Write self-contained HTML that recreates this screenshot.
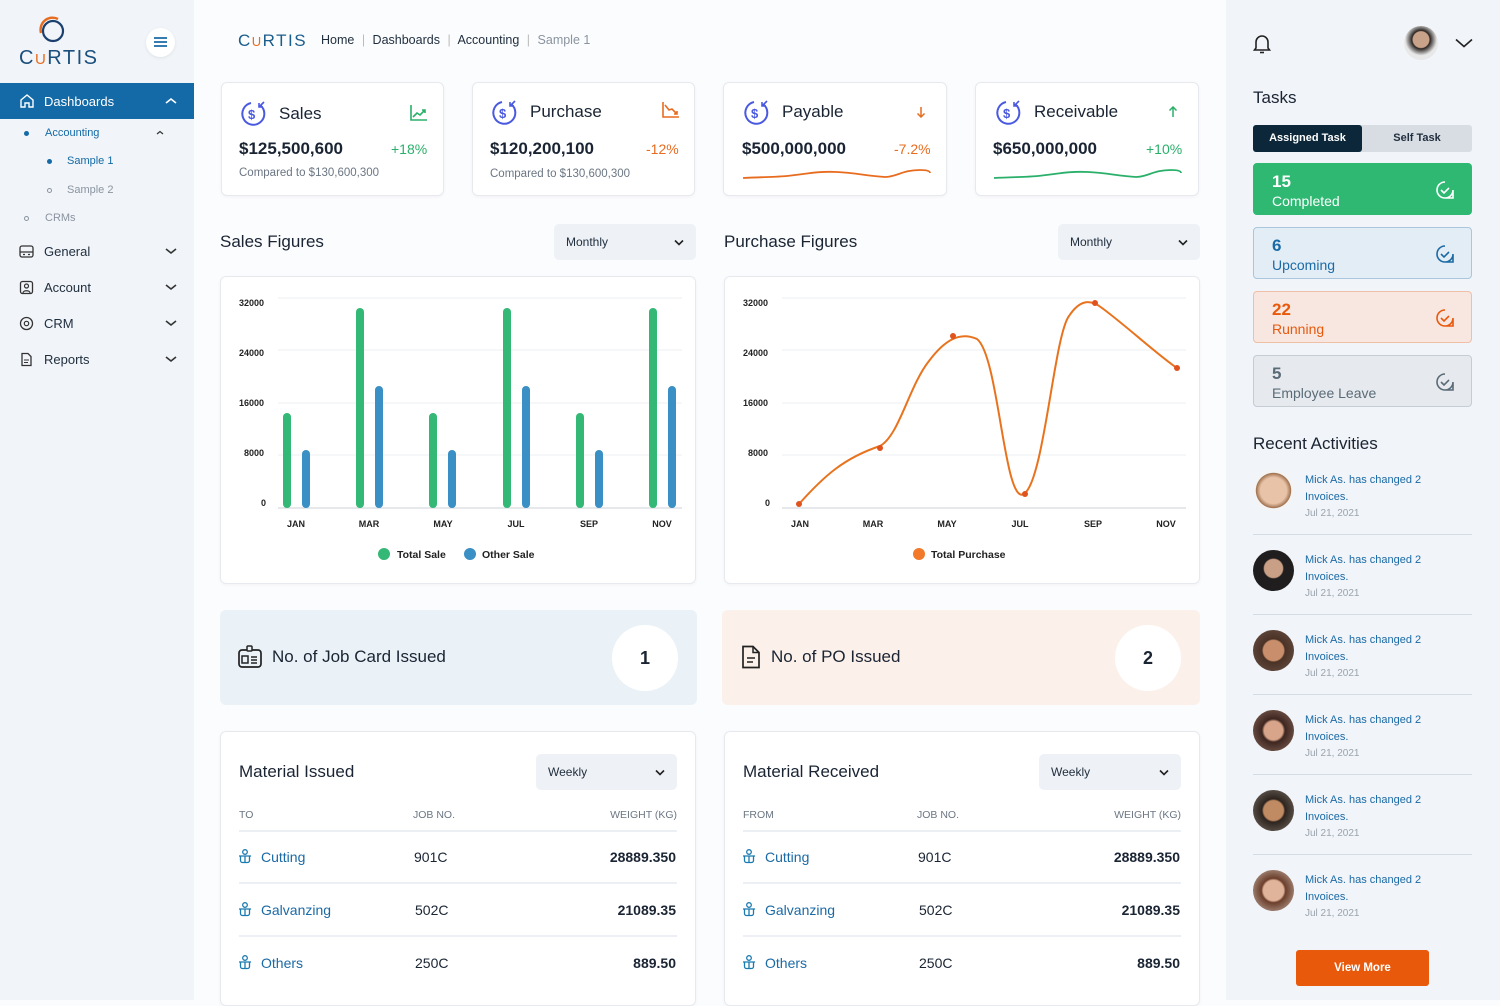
<!DOCTYPE html>
<html><head><meta charset="utf-8"><style>
*{box-sizing:border-box;margin:0;padding:0}
body{width:1500px;height:1000px;overflow:hidden;background:#fbfcfd;font-family:"Liberation Sans",sans-serif;color:#1a2433;position:relative}
.a{position:absolute}
.side{left:0;top:0;width:194px;height:1000px;background:#f1f4f8}
.right{left:1226px;top:0;width:274px;height:1000px;background:#f1f4f8}
.card{position:absolute;background:#fff;border:1px solid #e6eaef;border-radius:6px;box-shadow:0 1px 3px rgba(0,0,0,.04)}
.nav{position:absolute;left:0;width:194px;height:36px;display:flex;align-items:center;font-size:13px;color:#1f2d3d}
.nav svg{position:absolute;left:19px}
.nav span{position:absolute;left:44px}
.nav .chev{position:absolute;left:165px}
.dd{position:absolute;background:#eef1f5;border-radius:5px;font-size:12px;color:#1f2d3d;display:flex;align-items:center;padding-left:12px}
.dd svg{position:absolute;right:12px}
.t{position:absolute;white-space:nowrap}
.task{position:absolute;left:1253px;width:219px;height:52px;border-radius:4px;border:1px solid}
.task b{position:absolute;left:18px;top:8px;font-size:17px}
.task span{position:absolute;left:18px;top:29px;font-size:14px}
.task svg{position:absolute;right:16px;top:16px}
.act .av{position:absolute;left:1253px;width:41px;height:41px;border-radius:50%}
</style></head><body>

<!-- Sidebar -->
<div class="a side"></div>
<svg class="a" style="left:36px;top:15px" width="34" height="32" viewBox="0 0 34 32"><circle cx="17" cy="16" r="10" fill="none" stroke="#1b3f6e" stroke-width="2.2"/><path d="M5 18A12 12 0 0 1 22 4" fill="none" stroke="#e86c1f" stroke-width="2.4"/></svg>
<div class="t" style="left:19px;top:47px;font-size:20px;letter-spacing:1.5px;color:#1b4f7c">C<span style="color:#e86c1f;font-size:15px">U</span>RTIS</div>
<div class="a" style="left:146px;top:28px;width:29px;height:29px;border-radius:50%;background:#fff;box-shadow:0 1px 3px rgba(0,0,0,.08)"></div>
<svg class="a" style="left:153px;top:36px" width="15" height="12"><path d="M1 2h13M1 6h13M1 10h13" stroke="#1b6aa5" stroke-width="1.8"/></svg>

<div class="nav" style="top:83px;background:#136aa6;color:#fff"><svg width="16" height="16" viewBox="0 0 16 16"><path d="M2 7l6-5 6 5v7H10V10H6v4H2z" fill="none" stroke="#fff" stroke-width="1.4"/></svg><span>Dashboards</span><svg class="chev" width="12" height="8"><path d="M1 6l5-4 5 4" fill="none" stroke="#fff" stroke-width="1.6"/></svg></div>
<div class="a" style="left:24px;top:131px;width:5px;height:5px;border-radius:50%;background:#136aa6"></div>
<div class="t" style="left:45px;top:127px;font-size:11px;color:#136aa6">Accounting</div>
<svg class="a" style="left:156px;top:130px" width="8" height="6"><path d="M1 4l3-2.5 3 2.5" fill="none" stroke="#333" stroke-width="1.2"/></svg>
<div class="a" style="left:47px;top:159px;width:5px;height:5px;border-radius:50%;background:#136aa6"></div>
<div class="t" style="left:67px;top:155px;font-size:11px;color:#136aa6">Sample 1</div>
<div class="a" style="left:47px;top:188px;width:5px;height:5px;border-radius:50%;border:1px solid #8a94a0"></div>
<div class="t" style="left:67px;top:184px;font-size:11px;color:#8a94a0">Sample 2</div>
<div class="a" style="left:24px;top:216px;width:5px;height:5px;border-radius:50%;border:1px solid #8a94a0"></div>
<div class="t" style="left:45px;top:212px;font-size:11px;color:#8a94a0">CRMs</div>

<div class="nav" style="top:233px"><svg width="15" height="15" viewBox="0 0 15 15"><rect x="1" y="2" width="13" height="11" rx="2" fill="none" stroke="#333" stroke-width="1.3"/><path d="M1 8h13M4 10.5h2M9 10.5h2" stroke="#333" stroke-width="1.2"/></svg><span>General</span><svg class="chev" width="12" height="8"><path d="M1 2l5 4 5-4" fill="none" stroke="#333" stroke-width="1.6"/></svg></div>
<div class="nav" style="top:269px"><svg width="15" height="15" viewBox="0 0 15 15"><rect x="1.5" y="1.5" width="12" height="12" rx="2" fill="none" stroke="#333" stroke-width="1.3"/><circle cx="7.5" cy="6" r="2" fill="none" stroke="#333" stroke-width="1.2"/><path d="M4 13c0-3 7-3 7 0" fill="none" stroke="#333" stroke-width="1.2"/></svg><span>Account</span><svg class="chev" width="12" height="8"><path d="M1 2l5 4 5-4" fill="none" stroke="#333" stroke-width="1.6"/></svg></div>
<div class="nav" style="top:305px"><svg width="15" height="15" viewBox="0 0 15 15"><circle cx="7.5" cy="7.5" r="6" fill="none" stroke="#333" stroke-width="1.3"/><circle cx="7.5" cy="7.5" r="2.2" fill="none" stroke="#333" stroke-width="1.2"/></svg><span>CRM</span><svg class="chev" width="12" height="8"><path d="M1 2l5 4 5-4" fill="none" stroke="#333" stroke-width="1.6"/></svg></div>
<div class="nav" style="top:341px"><svg width="15" height="15" viewBox="0 0 15 15"><path d="M3 1.5h6l3 3v9H3z" fill="none" stroke="#333" stroke-width="1.3"/><path d="M5 8h5M5 10.5h4" stroke="#333" stroke-width="1.1"/></svg><span>Reports</span><svg class="chev" width="12" height="8"><path d="M1 2l5 4 5-4" fill="none" stroke="#333" stroke-width="1.6"/></svg></div>

<!-- Header -->
<div class="t" style="left:238px;top:31px;font-size:17px;letter-spacing:1.5px;color:#1b5d8c">C<span style="color:#e86c1f;font-size:13px">U</span>RTIS</div>
<div class="t" style="left:321px;top:33px;font-size:12.5px;color:#1f2d3d">Home <span style="color:#bbb;margin:0 4px">|</span> Dashboards <span style="color:#bbb;margin:0 4px">|</span> Accounting <span style="color:#bbb;margin:0 4px">|</span> <span style="color:#8a94a0">Sample 1</span></div>

<!-- Stat cards -->
<svg width="0" height="0" style="position:absolute"><defs><g id="dol"><path d="M20 6a11 11 0 1 1-9-2" fill="none" stroke="#4a5ae0" stroke-width="2"/><text x="8" y="20" font-size="13" font-weight="bold" fill="#4a5ae0" font-family="Liberation Sans">$</text><path d="M24 3l-5 5M19 4v4h4" fill="none" stroke="#4a5ae0" stroke-width="1.6"/></g></defs></svg>

<div class="card" style="left:221px;top:82px;width:223px;height:114px"></div>
<svg class="a" style="left:240px;top:99px" width="28" height="28"><use href="#dol"/></svg>
<div class="t" style="left:279px;top:104px;font-size:17px">Sales</div>
<svg class="a" style="left:409px;top:104px" width="20" height="18"><path d="M2 1v15h16M4 13l4-4 3 2 5-5M13 6h3v3" fill="none" stroke="#2ab06a" stroke-width="1.6"/></svg>
<div class="t" style="left:239px;top:139px;font-size:17px;font-weight:bold">$125,500,600</div>
<div class="t" style="left:391px;top:141px;font-size:14px;color:#2ab06a">+18%</div>
<div class="t" style="left:239px;top:167px;font-size:11.5px;color:#6b7683">Compared to $130,600,300</div>

<div class="card" style="left:472px;top:82px;width:223px;height:114px"></div>
<svg class="a" style="left:491px;top:98px" width="28" height="28"><use href="#dol"/></svg>
<div class="t" style="left:530px;top:102px;font-size:17px">Purchase</div>
<svg class="a" style="left:661px;top:101px" width="20" height="18"><path d="M2 1v15h16M4 4l4 5 3-1 5 5M16 10v3h-3" fill="none" stroke="#e86c1f" stroke-width="1.6"/></svg>
<div class="t" style="left:490px;top:139px;font-size:17px;font-weight:bold">$120,200,100</div>
<div class="t" style="left:646px;top:141px;font-size:14px;color:#e86c1f">-12%</div>
<div class="t" style="left:490px;top:168px;font-size:11.5px;color:#6b7683">Compared to $130,600,300</div>

<div class="card" style="left:723px;top:82px;width:224px;height:114px"></div>
<svg class="a" style="left:743px;top:98px" width="28" height="28"><use href="#dol"/></svg>
<div class="t" style="left:782px;top:102px;font-size:17px">Payable</div>
<svg class="a" style="left:916px;top:106px" width="10" height="12"><path d="M5 1v10M1.5 7.5L5 11l3.5-3.5" fill="none" stroke="#e86c1f" stroke-width="1.5"/></svg>
<div class="t" style="left:742px;top:139px;font-size:17px;font-weight:bold">$500,000,000</div>
<div class="t" style="left:894px;top:141px;font-size:14px;color:#e86c1f">-7.2%</div>
<svg class="a" style="left:742px;top:165px" width="190" height="20"><path d="M1 13C20 12 35 12 45 11 65 9 75 6 95 7 115 8 125 11 143 12 155 12 160 5 178 5 185 5 188 6 188 8" fill="none" stroke="#e86c1f" stroke-width="1.8"/></svg>

<div class="card" style="left:975px;top:82px;width:224px;height:114px"></div>
<svg class="a" style="left:995px;top:98px" width="28" height="28"><use href="#dol"/></svg>
<div class="t" style="left:1034px;top:102px;font-size:17px">Receivable</div>
<svg class="a" style="left:1168px;top:106px" width="10" height="12"><path d="M5 11V1M1.5 4.5L5 1l3.5 3.5" fill="none" stroke="#2ab06a" stroke-width="1.5"/></svg>
<div class="t" style="left:993px;top:139px;font-size:17px;font-weight:bold">$650,000,000</div>
<div class="t" style="left:1146px;top:141px;font-size:14px;color:#2ab06a">+10%</div>
<svg class="a" style="left:993px;top:165px" width="190" height="20"><path d="M1 13C20 12 35 12 45 11 65 9 75 6 95 7 115 8 125 11 143 12 155 12 160 5 178 5 185 5 188 6 188 8" fill="none" stroke="#2ab06a" stroke-width="1.8"/></svg>

<!-- Section headers -->
<div class="t" style="left:220px;top:232px;font-size:17px">Sales Figures</div>
<div class="dd" style="left:554px;top:224px;width:142px;height:36px">Monthly<svg width="10" height="7"><path d="M1 1.5l4 4 4-4" fill="none" stroke="#222" stroke-width="1.6"/></svg></div>
<div class="t" style="left:724px;top:232px;font-size:17px">Purchase Figures</div>
<div class="dd" style="left:1058px;top:224px;width:142px;height:36px">Monthly<svg width="10" height="7"><path d="M1 1.5l4 4 4-4" fill="none" stroke="#222" stroke-width="1.6"/></svg></div>

<!-- Sales chart -->
<div class="card" style="left:220px;top:276px;width:476px;height:308px"></div>
<svg class="a" style="left:220px;top:276px" width="476" height="308" font-family="Liberation Sans" font-size="9" font-weight="bold" fill="#222">
<g stroke="#eceff3"><path d="M58 22H462M58 74H462M58 127H462M58 179H462"/></g><path d="M58 232H462" stroke="#ccd2d9"/>
<text x="19" y="30">32000</text><text x="19" y="80">24000</text><text x="19" y="130">16000</text><text x="24" y="180">8000</text><text x="41" y="230">0</text>
<g text-anchor="middle"><text x="76" y="251">JAN</text><text x="149" y="251">MAR</text><text x="223" y="251">MAY</text><text x="296" y="251">JUL</text><text x="369" y="251">SEP</text><text x="442" y="251">NOV</text></g>
<g fill="#34b876"><rect x="63" y="137" width="8" height="95" rx="4"/><rect x="136" y="32" width="8" height="200" rx="4"/><rect x="209" y="137" width="8" height="95" rx="4"/><rect x="283" y="32" width="8" height="200" rx="4"/><rect x="356" y="137" width="8" height="95" rx="4"/><rect x="429" y="32" width="8" height="200" rx="4"/></g>
<g fill="#3a8fc4"><rect x="82" y="174" width="8" height="58" rx="4"/><rect x="155" y="110" width="8" height="122" rx="4"/><rect x="228" y="174" width="8" height="58" rx="4"/><rect x="302" y="110" width="8" height="122" rx="4"/><rect x="375" y="174" width="8" height="58" rx="4"/><rect x="448" y="110" width="8" height="122" rx="4"/></g>
<circle cx="164" cy="278" r="6" fill="#34b876"/><text x="177" y="282" font-size="10.5">Total Sale</text>
<circle cx="250" cy="278" r="6" fill="#3a8fc4"/><text x="262" y="282" font-size="10.5">Other Sale</text>
</svg>

<!-- Purchase chart -->
<div class="card" style="left:724px;top:276px;width:476px;height:308px"></div>
<svg class="a" style="left:724px;top:276px" width="476" height="308" font-family="Liberation Sans" font-size="9" font-weight="bold" fill="#222">
<g stroke="#eceff3"><path d="M58 22H462M58 74H462M58 127H462M58 179H462"/></g><path d="M58 232H462" stroke="#ccd2d9"/>
<text x="19" y="30">32000</text><text x="19" y="80">24000</text><text x="19" y="130">16000</text><text x="24" y="180">8000</text><text x="41" y="230">0</text>
<g text-anchor="middle"><text x="76" y="251">JAN</text><text x="149" y="251">MAR</text><text x="223" y="251">MAY</text><text x="296" y="251">JUL</text><text x="369" y="251">SEP</text><text x="442" y="251">NOV</text></g>
<path d="M75 228C100 200 120 182 156 170C175 160 185 110 205 85C220 65 235 55 253 63C275 80 280 230 300 218C320 205 330 60 345 40C355 25 365 22 378 32C400 48 435 80 453 92" fill="none" stroke="#e8731f" stroke-width="2"/>
<g fill="#e0531f"><circle cx="75" cy="228" r="3"/><circle cx="156" cy="172" r="3"/><circle cx="229" cy="60" r="3"/><circle cx="301" cy="218" r="3"/><circle cx="371" cy="27" r="3"/><circle cx="453" cy="92" r="3"/></g>
<circle cx="195" cy="278" r="6" fill="#f2792a"/><text x="207" y="282" font-size="10.5">Total Purchase</text>
</svg>

<!-- Issued boxes -->
<div class="a" style="left:220px;top:610px;width:477px;height:95px;background:#ebf2f7;border-radius:6px"></div>
<svg class="a" style="left:238px;top:645px" width="25" height="24" viewBox="0 0 25 24"><rect x="1" y="5" width="22" height="17" rx="3" fill="none" stroke="#222" stroke-width="1.7"/><rect x="9" y="1" width="5" height="5" rx="1" fill="#ebf2f7" stroke="#222" stroke-width="1.5"/><rect x="4" y="11" width="6" height="7" fill="none" stroke="#222" stroke-width="1.5"/><path d="M13 12h6M13 15h6M13 18h6" stroke="#222" stroke-width="1.5"/></svg>
<div class="t" style="left:272px;top:647px;font-size:17px">No. of Job Card Issued</div>
<div class="a" style="left:612px;top:625px;width:66px;height:66px;border-radius:50%;background:#fff;text-align:center;line-height:66px;font-weight:bold;font-size:18px">1</div>

<div class="a" style="left:722px;top:610px;width:478px;height:95px;background:#fbf0ea;border-radius:6px"></div>
<svg class="a" style="left:740px;top:645px" width="22" height="24" viewBox="0 0 22 24"><path d="M3 1.5h10l6 6v15H3z" fill="none" stroke="#222" stroke-width="1.7"/><path d="M13 1.5v6h6M7 13h8M7 17h6" fill="none" stroke="#222" stroke-width="1.5"/></svg>
<div class="t" style="left:771px;top:647px;font-size:17px">No. of PO Issued</div>
<div class="a" style="left:1115px;top:625px;width:66px;height:66px;border-radius:50%;background:#fff;text-align:center;line-height:66px;font-weight:bold;font-size:18px">2</div>

<!-- Material tables -->
<div class="card" style="left:220px;top:731px;width:476px;height:275px"></div>
<div class="t" style="left:239px;top:762px;font-size:17px">Material Issued</div>
<div class="dd" style="left:536px;top:754px;width:141px;height:36px">Weekly<svg width="10" height="7"><path d="M1 1.5l4 4 4-4" fill="none" stroke="#222" stroke-width="1.6"/></svg></div>
<div class="t" style="left:239px;top:809px;font-size:10.5px;color:#6b7683">TO</div>
<div class="t" style="left:413px;top:809px;font-size:10.5px;color:#6b7683">JOB NO.</div>
<div class="t" style="right:823px;top:809px;font-size:10.5px;color:#6b7683">WEIGHT (KG)</div>
<div class="a" style="left:239px;top:830px;width:438px;height:2px;background:#eceff3"></div>
<div class="a" style="left:239px;top:882px;width:438px;height:2px;background:#eceff3"></div>
<div class="a" style="left:239px;top:935px;width:438px;height:2px;background:#eceff3"></div>

<div class="card" style="left:724px;top:731px;width:476px;height:275px"></div>
<div class="t" style="left:743px;top:762px;font-size:17px">Material Received</div>
<div class="dd" style="left:1039px;top:754px;width:142px;height:36px">Weekly<svg width="10" height="7"><path d="M1 1.5l4 4 4-4" fill="none" stroke="#222" stroke-width="1.6"/></svg></div>
<div class="t" style="left:743px;top:809px;font-size:10.5px;color:#6b7683">FROM</div>
<div class="t" style="left:917px;top:809px;font-size:10.5px;color:#6b7683">JOB NO.</div>
<div class="t" style="right:319px;top:809px;font-size:10.5px;color:#6b7683">WEIGHT (KG)</div>
<div class="a" style="left:743px;top:830px;width:438px;height:2px;background:#eceff3"></div>
<div class="a" style="left:743px;top:882px;width:438px;height:2px;background:#eceff3"></div>
<div class="a" style="left:743px;top:935px;width:438px;height:2px;background:#eceff3"></div>

<svg width="0" height="0" style="position:absolute"><defs><g id="ci"><circle cx="7" cy="3" r="2.3" fill="none" stroke="#1b7bb0" stroke-width="1.3"/><path d="M1 7h12M2.5 7v4.5a2 2 0 0 0 2 2h5a2 2 0 0 0 2-2V7M7 7v6.5" fill="none" stroke="#1b7bb0" stroke-width="1.3"/></g></defs></svg>
<div style="font-size:14px">
<svg class="a" style="left:238px;top:849px" width="15" height="15"><use href="#ci"/></svg><div class="t" style="left:261px;top:849px;color:#1b6aa5">Cutting</div><div class="t" style="left:414px;top:849px">901C</div><div class="t" style="right:824px;top:849px;font-weight:bold">28889.350</div>
<svg class="a" style="left:238px;top:902px" width="15" height="15"><use href="#ci"/></svg><div class="t" style="left:261px;top:902px;color:#1b6aa5">Galvanzing</div><div class="t" style="left:415px;top:902px">502C</div><div class="t" style="right:824px;top:902px;font-weight:bold">21089.35</div>
<svg class="a" style="left:238px;top:955px" width="15" height="15"><use href="#ci"/></svg><div class="t" style="left:261px;top:955px;color:#1b6aa5">Others</div><div class="t" style="left:415px;top:955px">250C</div><div class="t" style="right:824px;top:955px;font-weight:bold">889.50</div>

<svg class="a" style="left:742px;top:849px" width="15" height="15"><use href="#ci"/></svg><div class="t" style="left:765px;top:849px;color:#1b6aa5">Cutting</div><div class="t" style="left:918px;top:849px">901C</div><div class="t" style="right:320px;top:849px;font-weight:bold">28889.350</div>
<svg class="a" style="left:742px;top:902px" width="15" height="15"><use href="#ci"/></svg><div class="t" style="left:765px;top:902px;color:#1b6aa5">Galvanzing</div><div class="t" style="left:919px;top:902px">502C</div><div class="t" style="right:320px;top:902px;font-weight:bold">21089.35</div>
<svg class="a" style="left:742px;top:955px" width="15" height="15"><use href="#ci"/></svg><div class="t" style="left:765px;top:955px;color:#1b6aa5">Others</div><div class="t" style="left:919px;top:955px">250C</div><div class="t" style="right:320px;top:955px;font-weight:bold">889.50</div>
</div>

<!-- Right panel -->
<div class="a right"></div>
<svg class="a" style="left:1252px;top:33px" width="20" height="22" viewBox="0 0 20 22"><path d="M4 15V9a6 6 0 0 1 12 0v6l1.5 2h-15z" fill="none" stroke="#222" stroke-width="1.6"/><path d="M8 19.5h4" stroke="#222" stroke-width="1.6"/></svg>
<div class="a" style="left:1404px;top:26px;width:34px;height:34px;border-radius:50%;background:radial-gradient(circle at 50% 40%,#c9a28a 0 30%,#2a2522 34%,#e8e8e8 60%)"></div>
<svg class="a" style="left:1455px;top:38px" width="18" height="11"><path d="M1 1.5l8 7 8-7" fill="none" stroke="#222" stroke-width="1.6"/></svg>

<div class="t" style="left:1253px;top:88px;font-size:17px">Tasks</div>
<div class="a" style="left:1253px;top:125px;width:219px;height:27px;background:#d8dde4;border-radius:3px"></div>
<div class="a" style="left:1253px;top:125px;width:109px;height:27px;background:#0b2739;border-radius:3px;color:#fff;font-size:11px;font-weight:bold;text-align:center;line-height:27px">Assigned Task</div>
<div class="t" style="left:1362px;top:125px;width:110px;text-align:center;line-height:27px;font-size:11px;font-weight:bold;color:#1f2d3d">Self Task</div>

<div class="task" style="top:163px;background:#2eb872;border-color:#2eb872;color:#fff"><b>15</b><span>Completed</span><svg width="20" height="20" viewBox="0 0 20 20"><path d="M10 2a8 8 0 1 0 8 8v8h-8" fill="none" stroke="#fff" stroke-width="1.6"/><path d="M6 10l3 3 5-5" fill="none" stroke="#fff" stroke-width="1.6"/></svg></div>
<div class="task" style="top:227px;background:#e3edf5;border-color:#a9c6dd;color:#1b6aa5"><b>6</b><span>Upcoming</span><svg width="20" height="20" viewBox="0 0 20 20"><path d="M10 2a8 8 0 1 0 8 8v8h-8" fill="none" stroke="#1b6aa5" stroke-width="1.6"/><path d="M6 10l3 3 5-5" fill="none" stroke="#1b6aa5" stroke-width="1.6"/></svg></div>
<div class="task" style="top:291px;background:#f8e6e0;border-color:#f0c0a6;color:#e8590c"><b>22</b><span>Running</span><svg width="20" height="20" viewBox="0 0 20 20"><path d="M10 2a8 8 0 1 0 8 8v8h-8" fill="none" stroke="#e8590c" stroke-width="1.6"/><path d="M6 10l3 3 5-5" fill="none" stroke="#e8590c" stroke-width="1.6"/></svg></div>
<div class="task" style="top:355px;background:#e6e9ed;border-color:#c5ccd4;color:#5a6b78"><b>5</b><span>Employee Leave</span><svg width="20" height="20" viewBox="0 0 20 20"><path d="M10 2a8 8 0 1 0 8 8v8h-8" fill="none" stroke="#5a6b78" stroke-width="1.6"/><path d="M6 10l3 3 5-5" fill="none" stroke="#5a6b78" stroke-width="1.6"/></svg></div>

<div class="t" style="left:1253px;top:434px;font-size:17px">Recent Activities</div>
<div class="act" style="font-size:11px">
<div class="av" style="top:470px;background:radial-gradient(circle at 50% 50%,#e8c3a8 0 45%,#a0724f 60%,#f4f4f4 62%)"></div>
<div class="t" style="left:1305px;top:472px;line-height:17px;color:#1b6aa5">Mick As. has changed 2<br>Invoices.</div><div class="t" style="left:1305px;top:508px;font-size:10px;color:#9aa3ad">Jul 21, 2021</div>
<div class="a" style="left:1253px;top:534px;width:219px;height:1px;background:#d5dbe2"></div>
<div class="av" style="top:550px;background:radial-gradient(circle at 50% 45%,#c99f86 0 30%,#1f1d1d 34%)"></div>
<div class="t" style="left:1305px;top:552px;line-height:17px;color:#1b6aa5">Mick As. has changed 2<br>Invoices.</div><div class="t" style="left:1305px;top:588px;font-size:10px;color:#9aa3ad">Jul 21, 2021</div>
<div class="a" style="left:1253px;top:614px;width:219px;height:1px;background:#d5dbe2"></div>
<div class="av" style="top:630px;background:radial-gradient(circle at 50% 50%,#c98f6c 0 35%,#4a3226 40%,#6b5447)"></div>
<div class="t" style="left:1305px;top:632px;line-height:17px;color:#1b6aa5">Mick As. has changed 2<br>Invoices.</div><div class="t" style="left:1305px;top:668px;font-size:10px;color:#9aa3ad">Jul 21, 2021</div>
<div class="a" style="left:1253px;top:694px;width:219px;height:1px;background:#d5dbe2"></div>
<div class="av" style="top:710px;background:radial-gradient(circle at 50% 50%,#d9a58a 0 32%,#3d2620 40%,#8a6a5c)"></div>
<div class="t" style="left:1305px;top:712px;line-height:17px;color:#1b6aa5">Mick As. has changed 2<br>Invoices.</div><div class="t" style="left:1305px;top:748px;font-size:10px;color:#9aa3ad">Jul 21, 2021</div>
<div class="a" style="left:1253px;top:774px;width:219px;height:1px;background:#d5dbe2"></div>
<div class="av" style="top:790px;background:radial-gradient(circle at 50% 50%,#c08a62 0 34%,#2d241f 40%,#7a7066)"></div>
<div class="t" style="left:1305px;top:792px;line-height:17px;color:#1b6aa5">Mick As. has changed 2<br>Invoices.</div><div class="t" style="left:1305px;top:828px;font-size:10px;color:#9aa3ad">Jul 21, 2021</div>
<div class="a" style="left:1253px;top:854px;width:219px;height:1px;background:#d5dbe2"></div>
<div class="av" style="top:870px;background:radial-gradient(circle at 50% 50%,#e0b49a 0 35%,#6b3e2b 42%,#c9b8ad)"></div>
<div class="t" style="left:1305px;top:872px;line-height:17px;color:#1b6aa5">Mick As. has changed 2<br>Invoices.</div><div class="t" style="left:1305px;top:908px;font-size:10px;color:#9aa3ad">Jul 21, 2021</div>
</div>
<div class="a" style="left:1296px;top:950px;width:133px;height:36px;background:#e8590c;border-radius:3px;color:#fff;font-size:11.5px;font-weight:bold;text-align:center;line-height:36px">View More</div>
</body></html>
